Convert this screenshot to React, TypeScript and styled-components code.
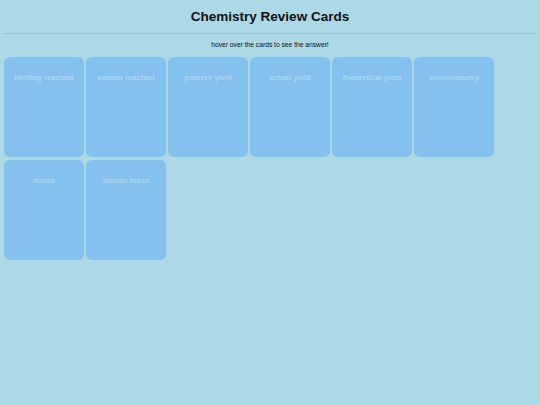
import React from 'react';
import styled, {createGlobalStyle} from "styled-components";

const terms = [
    'limiting reactant',
    'excess reactant',
    'percent yield',
    'actual yield',
    'theoretical yield',
    'stoichiometry',
    'moles',
    'atomic mass',
]

function App() {
    return (
        <>
            <GlobalStyle/>
            <Page>
                <Title>Chemistry Review Cards</Title>
                <Rule/>
                <Hint>hover over the cards to see the answer!</Hint>
                <Deck>
                    {terms.map(term => (
                        <Card key={term}>
                            <Term>{term}</Term>
                        </Card>
                    ))}
                </Deck>
            </Page>
        </>
    );
}

const GlobalStyle = createGlobalStyle`
  html, body {
    margin: 0;
    background: #add8e6;
    font-family: "Liberation Sans", Arial, sans-serif;
  }
`

const Page = styled.div`
  padding: 0 4px;
  min-height: 405px;
  box-sizing: border-box;
`

const Title = styled.h1`
  margin: 0;
  padding-top: 9px;
  height: 24px;
  font-size: 13.5px;
  line-height: 16px;
  text-align: center;
  color: #111;
`

const Rule = styled.div`
  border-top: 1px solid #9dc3cf;
`

const Hint = styled.p`
  margin: 6px 0 0;
  height: 17px;
  font-size: 6.7px;
  line-height: 10px;
  text-align: center;
  color: #111;
`

const Deck = styled.div`
  display: flex;
  flex-wrap: wrap;
  column-gap: 2px;
  row-gap: 3px;
`

const Card = styled.div`
  width: 80px;
  height: 100px;
  border-radius: 6px;
  background: #84c1ee;
  padding-top: 16px;
  box-sizing: border-box;
`

const Term = styled.div`
  font-size: 7.7px;
  line-height: 9px;
  font-weight: bold;
  text-align: center;
  color: #acd6f2;
`

export default App;
